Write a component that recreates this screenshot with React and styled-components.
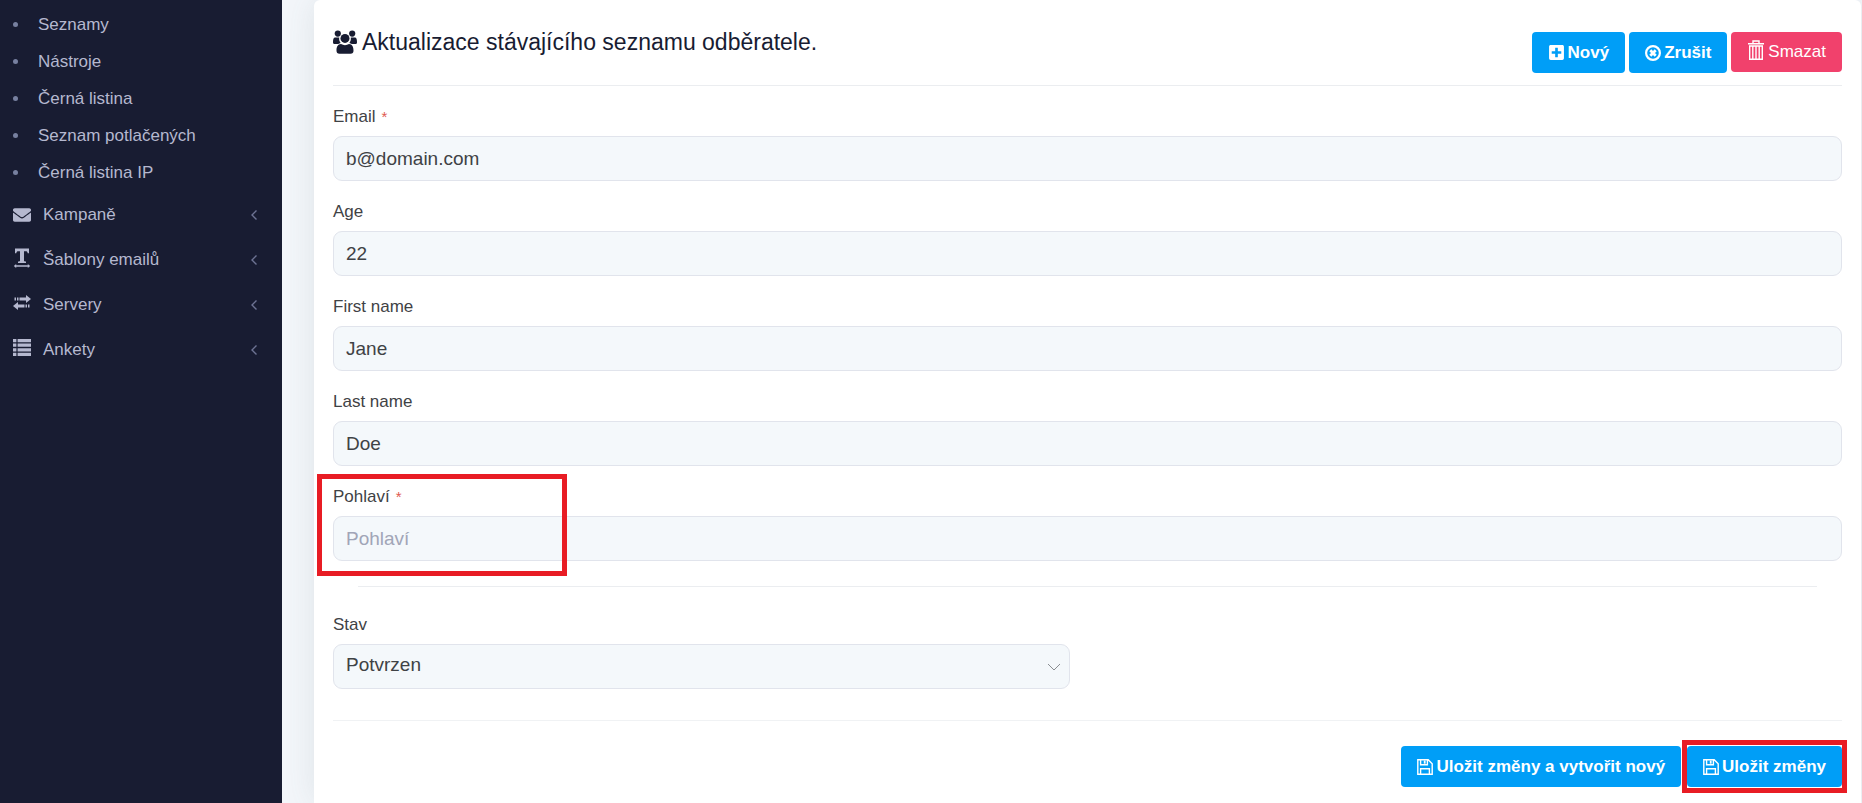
import styled, { createGlobalStyle } from "styled-components"
import { FaEnvelope, FaPlusSquare } from "react-icons/fa"

const lists = ["Seznamy", "Nástroje", "Černá listina", "Seznam potlačených", "Černá listina IP"]

const menu = [
  { label: "Kampaně", icon: <FaEnvelope /> },
  { label: "Šablony emailů", icon: <TextIcon />, raised: true },
  { label: "Servery", icon: <ExchangeIcon />, raised: true },
  { label: "Ankety", icon: <ListIcon />, raised: true },
]

const fields = [
  { id: "email", label: "Email", value: "b@domain.com", required: true },
  { id: "age", label: "Age", value: "22" },
  { id: "first-name", label: "First name", value: "Jane" },
  { id: "last-name", label: "Last name", value: "Doe" },
  { id: "gender", label: "Pohlaví", placeholder: "Pohlaví", required: true, marked: true },
]

export default function App() {
  return (
    <Page>
      <GlobalStyle />
      <Sidebar>
        <SubMenu>
          {lists.map((label) => (
            <li key={label}>
              <SubLink href="#">{label}</SubLink>
            </li>
          ))}
        </SubMenu>
        <Menu>
          {menu.map((item) => (
            <li key={item.label}>
              <MenuLink href="#">
                <MenuIcon $raised={item.raised}>{item.icon}</MenuIcon>
                <MenuLabel>{item.label}</MenuLabel>
                <ArrowIcon />
              </MenuLink>
            </li>
          ))}
        </Menu>
      </Sidebar>

      <Content>
        <Card>
          <Header>
            <Title>
              <UsersIcon />
              Aktualizace stávajícího seznamu odběratele.
            </Title>
            <Actions>
              <Button type="button"><FaPlusSquare />Nový</Button>
              <Button type="button"><CancelIcon />Zrušit</Button>
              <DangerButton type="button"><TrashIcon />Smazat</DangerButton>
            </Actions>
          </Header>

          <Fields>
            {fields.map((field) => (
              <Field key={field.id}>
                <Label htmlFor={field.id}>
                  {field.label}
                  {field.required && <Required>*</Required>}
                </Label>
                <Input id={field.id} defaultValue={field.value} placeholder={field.placeholder} />
                {field.marked && <FieldMark />}
              </Field>
            ))}
          </Fields>

          <Divider />

          <StatusField>
            <Label htmlFor="status">Stav</Label>
            <SelectWrapper>
              <Select id="status" defaultValue="confirmed">
                <option value="confirmed">Potvrzen</option>
              </Select>
              <SelectArrow viewBox="0 0 14 8">
                <path d="M1 1l6 6 6-6" fill="none" stroke="#8a8e92" />
              </SelectArrow>
            </SelectWrapper>
          </StatusField>

          <Footer>
            <Button type="button"><SaveIcon />Uložit změny a vytvořit nový</Button>
            <Marked>
              <Button type="submit"><SaveIcon />Uložit změny</Button>
              <ButtonMark />
            </Marked>
          </Footer>
        </Card>
      </Content>
    </Page>
  )
}

function TextIcon() {
  return (
    <svg width="18" height="20" viewBox="0 0 18 20" fill="currentColor">
      <path d="M2 .5h14v4.800h-1.300c-.3-1.400-.7-2-2-2H11v9.200c0 .8.500 1 2 1.100V15H5v-1.400c1.500-.1 2-.3 2-1.100V3.300H5.300c-1.300 0-1.700.6-2 2H2z" />
      <path d="M.8 18l2.400-1.900v1.100h11.600v-1.100l2.400 1.900-2.400 1.900v-1.100H3.200v1.100z" />
    </svg>
  )
}

function ExchangeIcon() {
  return (
    <svg width="18" height="15" viewBox="0 0 18 15" fill="currentColor">
      <path d="M6.500 2.600H13V0l5 4-5 4V5.400H6.500zM4 2.600h1.500v2.800H4zM1.500 2.600H3v2.800H1.500z" />
      <path d="M11.500 9.600H5V7l-5 4 5 4v-2.600h6.500zM12.500 9.600H14v2.800h-1.500zM15 9.600h1.500v2.800H15z" />
    </svg>
  )
}

function ListIcon() {
  return (
    <svg width="18" height="17" viewBox="0 0 18 17" fill="currentColor">
      {[0, 4.6, 9.2, 13.8].map((y) => (
        <path key={y} d={`M0 ${y}h3.400v3.200H0zM4.600 ${y}H18v3.200H4.600z`} />
      ))}
    </svg>
  )
}

function ArrowIcon() {
  return (
    <svg width="8" height="12" viewBox="0 0 8 12" fill="none" stroke="#6d7393" strokeWidth="1.400">
      <path d="M6.500 1.500L2 6l4.500 4.500" />
    </svg>
  )
}

function UsersIcon() {
  return (
    <svg width="24" height="24" viewBox="0 0 24 24" fill="#181c32">
      <circle cx="4.800" cy="3.600" r="3.100" />
      <circle cx="19.200" cy="3.600" r="3.100" />
      <path d="M1.800 7.600h4.400c-.3 2.200.2 4 1.500 5.300-1 .2-1.800.6-2.500 1.100H1.500C.5 14 0 13.200 0 12.200 0 9.900.4 7.600 1.800 7.600zM22.200 7.600h-4.400c.3 2.200-.2 4-1.500 5.300 1 .2 1.800.6 2.500 1.100h3.700c1 0 1.500-.8 1.500-1.800 0-2.300-.4-4.600-1.800-4.600z" />
      <circle cx="12" cy="8.400" r="4.500" />
      <path d="M8 14c2.500 1.500 5.500 1.500 8 0 3.300 0 4.500 3 4.500 6.700 0 1.800-1 3-3 3h-11c-2 0-3-1.200-3-3C3.500 17 4.700 14 8 14z" />
    </svg>
  )
}

function CancelIcon() {
  return (
    <svg width="16" height="16" viewBox="0 0 16 16" fill="none" stroke="currentColor">
      <circle cx="8" cy="8" r="6.900" strokeWidth="2.200" />
      <path d="M5.300 5.300l5.400 5.400M10.700 5.300l-5.400 5.400" strokeWidth="2.800" />
    </svg>
  )
}

function TrashIcon() {
  return (
    <svg width="18" height="20" viewBox="0 0 18 20" fill="none" stroke="currentColor" strokeWidth="1.400">
      <path d="M1 3.700h16M6 3.500V1h6v2.500M2.700 6h12.600v13.200H2.700zM5.800 6v13M9 6v13M12.200 6v13" />
    </svg>
  )
}

function SaveIcon() {
  return (
    <svg width="16" height="16" viewBox="0 0 16 16" fill="none" stroke="currentColor" strokeWidth="1.400">
      <path d="M.8.800h10.400l4 4v10.400H.8zM3.600 15V9.800h8.800V15M3.600 1v4.700h6.800V1" />
      <path d="M7.700 1.500v3.200" strokeWidth="1.800" />
    </svg>
  )
}

const GlobalStyle = createGlobalStyle`
  * {
    box-sizing: border-box;
  }
  body {
    margin: 0;
    background: #f3f6fa;
    color: #3f4245;
    font-family: "Liberation Sans", Arial, sans-serif;
    font-size: 17px;
  }
  ul {
    list-style: none;
    margin: 0;
    padding: 0;
  }
  svg {
    flex-shrink: 0;
  }
`
const Page = styled.div`
  display: flex;
  min-height: 100vh;
`
const Sidebar = styled.nav`
  flex: 0 0 282px;
  padding: 6px 0;
  background: #181c32;
`
const SubMenu = styled.ul`
  padding-bottom: 1px;
`
const SubLink = styled.a`
  display: flex;
  align-items: center;
  gap: 20px;
  height: 37px;
  padding-left: 13px;
  color: #b5b8cf;
  text-decoration: none;

  &::before {
    content: "";
    width: 5px;
    height: 5px;
    border-radius: 50%;
    background: #7780a0;
  }
`
const Menu = styled.ul``
const MenuLink = styled.a`
  display: flex;
  align-items: center;
  height: 45px;
  padding: 0 24px 0 13px;
  color: #b5b8cf;
  text-decoration: none;
`
const MenuIcon = styled.span`
  display: flex;
  width: 30px;
  padding-bottom: ${(props) => (props.$raised ? "4px" : "0")};
  font-size: 18px;
`
const MenuLabel = styled.span`
  flex: 1;
`
const Content = styled.main`
  display: flex;
  flex: 1;
  min-width: 0;
  padding: 0 1px 0 32px;
  background: #f3f6fa;
`
const Card = styled.form`
  flex: 1;
  min-width: 0;
  padding: 0 19px 16px;
  border-radius: 6px 6px 0 0;
  background: #fff;
  box-shadow: 0 0 32px rgba(70, 100, 100, .12);
`
const Header = styled.header`
  display: flex;
  justify-content: space-between;
  align-items: flex-start;
  padding: 30px 0 12px;
  border-bottom: 1px solid #ebedf0;
`
const Title = styled.h1`
  display: flex;
  align-items: center;
  gap: 5px;
  margin: 0;
  color: #181c32;
  font-size: 23px;
  font-weight: normal;
  line-height: 24px;
`
const Actions = styled.div`
  display: flex;
  align-items: flex-start;
  gap: 4px;
  padding-top: 2px;
`
const Button = styled.button`
  display: flex;
  align-items: center;
  gap: 3px;
  height: 41px;
  padding: 0 16px;
  border: 0;
  border-radius: 4px;
  background: #009ef7;
  color: #fff;
  font-family: inherit;
  font-size: 17px;
  font-weight: bold;
  cursor: pointer;
`
const DangerButton = styled(Button)`
  height: 40px;
  background: #f1416c;
  font-weight: normal;

  svg {
    margin-bottom: 4px;
  }
`
const Fields = styled.div`
  display: flex;
  flex-direction: column;
  gap: 19px;
  padding: 19px 0 25px;
`
const Field = styled.div`
  position: relative;
  display: flex;
  flex-direction: column;
  gap: 7px;
`
const Label = styled.label`
  line-height: 24px;
`
const Required = styled.span`
  margin-left: 6px;
  color: #e0594f;
  font-size: 15px;
`
const Input = styled.input`
  width: 100%;
  height: 45px;
  padding: 0 12px;
  border: 1px solid #e1e4ec;
  border-radius: 9px;
  background: #f4f8fb;
  color: #3f4245;
  font-family: inherit;
  font-size: 19px;

  &::placeholder {
    color: #a1a5b7;
  }
`
const Divider = styled.hr`
  height: 1px;
  margin: 0 25px;
  border: 0;
  background: #ebedf0;
`
const StatusField = styled(Field)`
  width: calc(50% - 18px);
  padding: 26px 0 31px;
`
const SelectWrapper = styled.div`
  position: relative;
`
const Select = styled.select`
  display: block;
  width: 100%;
  height: 45px;
  padding: 0 40px 4px 12px;
  appearance: none;
  border: 1px solid #e1e4ec;
  border-radius: 9px;
  background: #f4f8fb;
  color: #3f4245;
  font-family: inherit;
  font-size: 19px;
`
const SelectArrow = styled.svg`
  position: absolute;
  top: 19px;
  right: 9px;
  width: 14px;
  height: 8px;
  pointer-events: none;
`
const Footer = styled.footer`
  display: flex;
  justify-content: flex-end;
  gap: 6px;
  padding-top: 25px;
  border-top: 1px solid #f0f2f4;
`
const Marked = styled.div`
  position: relative;
`
const Mark = styled.span`
  position: absolute;
  border: 5px solid #e81c24;
  pointer-events: none;
`
const FieldMark = styled(Mark)`
  top: -11px;
  bottom: -15px;
  left: -16px;
  width: 250px;
`
const ButtonMark = styled(Mark)`
  inset: -6px -5px;
`
